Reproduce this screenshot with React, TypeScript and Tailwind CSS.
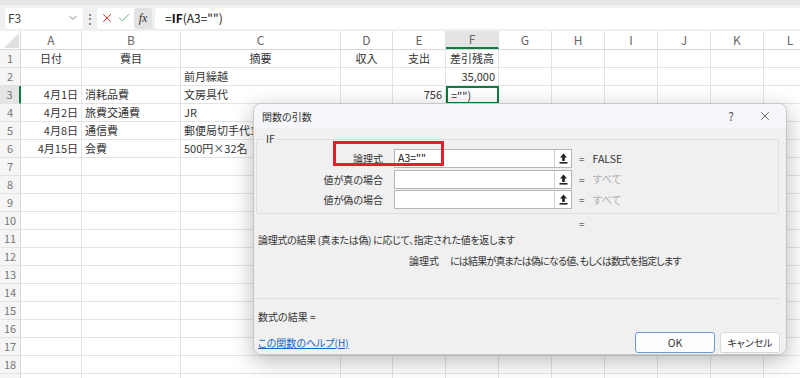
import React from 'react';
import { ChevronDown, X, Check } from 'lucide-react';

const cols = [
  { id: 'A', w: 61 },
  { id: 'B', w: 99 },
  { id: 'C', w: 160 },
  { id: 'D', w: 52 },
  { id: 'E', w: 53 },
  { id: 'F', w: 53 },
  { id: 'G', w: 53 },
  { id: 'H', w: 53 },
  { id: 'I', w: 53 },
  { id: 'J', w: 53 },
  { id: 'K', w: 53 },
  { id: 'L', w: 53 },
];

type Cell = { t: string; align?: 'l' | 'r' | 'c' };
const data: Record<number, Record<string, Cell>> = {
  1: {
    A: { t: '日付', align: 'c' },
    B: { t: '費目', align: 'c' },
    C: { t: '摘要', align: 'c' },
    D: { t: '収入', align: 'c' },
    E: { t: '支出', align: 'c' },
    F: { t: '差引残高', align: 'c' },
  },
  2: { C: { t: '前月繰越' }, F: { t: '35,000', align: 'r' } },
  3: { A: { t: '4月1日', align: 'r' }, B: { t: '消耗品費' }, C: { t: '文房具代' }, E: { t: '756', align: 'r' } },
  4: { A: { t: '4月2日', align: 'r' }, B: { t: '旅費交通費' }, C: { t: 'JR' } },
  5: { A: { t: '4月8日', align: 'r' }, B: { t: '通信費' }, C: { t: '郵便局切手代1' } },
  6: { A: { t: '4月15日', align: 'r' }, B: { t: '会費' }, C: { t: '500円×32名' } },
};

const font = { fontFamily: '"Noto Sans CJK JP", "Noto Sans", sans-serif' };

function RefButton() {
  return (
    <div className="w-[17px] h-full border-l border-[#d0d0d0] bg-white flex items-center justify-center">
      <svg width="9" height="11" viewBox="0 0 9 11">
        <path d="M4.5 0.5 L8 4.5 H5.8 V8 H3.2 V4.5 H1 Z" fill="#222" />
        <rect x="0.5" y="9" width="8" height="1.6" fill="#222" />
      </svg>
    </div>
  );
}

function ArgRow({ label, value, result, dim }: { label: string; value: string; result: string; dim?: boolean }) {
  return (
    <div className="flex items-center h-[19px]">
      <div className="w-[128px] text-right text-[10px] text-[#333] pr-[2px]">{label}</div>
      <div className="ml-[9px] w-[178px] h-[19px] bg-white border border-[#b5b5b5] flex items-center">
        <div className="flex-1 pl-[3px] text-[10.5px] text-[#111] leading-none">{value}</div>
        <RefButton />
      </div>
      <div className="ml-[7px] text-[10px] text-[#666]">=</div>
      <div className={`ml-[8px] text-[10.5px] ${dim ? 'text-[#b0b0b0]' : 'text-[#333]'}`}>{result}</div>
    </div>
  );
}

function Dialog() {
  return (
    <div
      className="absolute left-[253px] top-[103px] w-[534px] h-[252px] bg-[#f0f0f0] rounded-lg border border-[#c8c8c8] shadow-[0_6px_22px_rgba(0,0,0,0.28)] overflow-hidden [font-feature-settings:'palt']"
      style={font}
    >
      <div className="h-[24px] bg-[#f4f6fa] flex items-center pl-[8px] pr-[14px]">
        <span className="text-[10px] text-[#333]">関数の引数</span>
        <span className="ml-auto text-[12px] text-[#555]">?</span>
        <X size={14} strokeWidth={1.2} className="ml-[24px] text-[#333]" />
      </div>
      <div className="relative ml-[2px] mr-[7px] mt-[11px] h-[75px] border border-[#dedede] rounded-[2px] pt-[9px]">
        <span className="absolute -top-[8px] left-[7px] px-[2px] bg-[#f0f0f0] text-[10.5px] text-[#333] leading-[14px]">IF</span>
        <div className="flex flex-col gap-[1.5px]">
          <ArgRow label="論理式" value={'A3=""'} result="FALSE" />
          <ArgRow label="値が真の場合" value="" result="すべて" dim />
          <ArgRow label="値が偽の場合" value="" result="すべて" dim />
        </div>
        <div className="absolute left-[76px] top-[1px] w-[111px] h-[25px] border-[3px] border-[#e0202b]" />
      </div>
      <div className="h-[16px] pl-[325px] text-[10px] text-[#666] leading-[16px] mt-[2px]">=</div>
      <div className="pl-[4px] text-[10px] text-[#333] leading-[16px] tracking-[-0.3px]">
        論理式の結果 (真または偽) に応じて、指定された値を返します
      </div>
      <div className="pl-[155px] mt-[5px] flex text-[10px] text-[#333] leading-[16px]">
        <span>論理式</span>
        <span className="ml-[11px] tracking-[-0.8px]">には結果が真または偽になる値、もしくは数式を指定します</span>
      </div>
      <div className="mt-[29px] mr-[7px] border-t border-[#dedede]" />
      <div className="pl-[4px] mt-[10px] text-[10px] text-[#333] leading-[16px]">数式の結果 =</div>
      <div className="flex items-center mt-[7px] pr-[6px]">
        <span className="pl-[4px] text-[10px] text-[#1a66c2] underline">この関数のヘルプ(H)</span>
        <button className="ml-auto w-[80px] h-[21px] bg-[#fdfdfd] border border-[#6f9bd3] rounded-[3px] text-[10.5px] text-[#333]">
          OK
        </button>
        <button className="ml-[5px] w-[60px] h-[21px] bg-[#fdfdfd] border border-[#d8d8d8] rounded-[3px] text-[10px] text-[#333]">
          キャンセル
        </button>
      </div>
    </div>
  );
}

export default function App() {
  const rows = Array.from({ length: 19 }, (_, i) => i + 1);
  return (
    <div className="relative w-[800px] h-[378px] overflow-hidden bg-white" style={font}>
      {/* formula bar */}
      <div className="h-[31px] bg-[#f0f0f0] border-t-[5px] border-[#e6e6e6] flex items-center pl-[5px]">
        <div className="w-[78px] h-[21px] bg-white rounded-[3px] flex items-center pl-[3px] pr-[4px]">
          <span className="text-[12px] text-[#444]">F3</span>
          <ChevronDown size={12} strokeWidth={1.5} className="ml-auto text-[#555]" />
        </div>
        <div className="w-[14px] text-center text-[12px] text-[#555] leading-none">⋮</div>
        <div className="h-[21px] w-[55px] bg-white rounded-[3px] flex items-center pl-[3px]">
          <X size={14} strokeWidth={1.6} className="text-[#c42b1c]" />
          <Check size={14} strokeWidth={1.4} className="ml-[3px] text-[#4aa564]" />
          <div className="ml-[3px] w-[18px] h-[21px] bg-[#e3e3e3] rounded-[3px] flex items-center justify-center">
            <span className="text-[12px] italic text-[#333]" style={{ fontFamily: '"Liberation Serif", serif' }}>
              fx
            </span>
          </div>
        </div>
        <div className="ml-[3px] flex-1 h-[21px] bg-white rounded-l-[3px] flex items-center pl-[10px] text-[12px] text-[#111]">
          =<b className="font-bold">IF</b>(A3="")
        </div>
      </div>
      {/* column headers */}
      <div className="flex h-[19px] bg-white border-b border-[#d8d8d8]">
        <div className="w-[21px] shrink-0 flex items-end justify-end pr-[1px] pb-[1px] border-r border-[#d8d8d8]">
          <svg width="15" height="15" viewBox="0 0 15 15">
            <path d="M15 0 L15 15 L0 15 Z" fill="#e0e0e0" />
          </svg>
        </div>
        {cols.map((c) => (
          <div
            key={c.id}
            style={{ width: c.w }}
            className={`shrink-0 flex items-center justify-center text-[12px] text-[#666] border-r border-[#e0e0e0] ${
              c.id === 'F' ? 'bg-[#e4e4e4] border-b-2 border-b-[#107c41] text-[#107c41]' : ''
            }`}
          >
            {c.id}
          </div>
        ))}
      </div>
      {/* grid */}
      {rows.map((r) => (
        <div key={r} className="flex h-[18px]">
          <div
            className={`w-[21px] shrink-0 flex items-center justify-center text-[11px] text-[#777] border-b border-[#e3e3e3] ${
              r === 3 ? 'bg-[#e4e4e4] border-r-2 border-r-[#107c41] text-[#107c41]' : 'bg-[#f5f5f5] border-r border-r-[#d8d8d8]'
            }`}
          >
            {r < 19 ? r : ''}
          </div>
          {cols.map((c) => {
            const cell = data[r]?.[c.id];
            const sel = r === 3 && c.id === 'F';
            return (
              <div
                key={c.id}
                style={{ width: c.w }}
                className={`shrink-0 flex items-center text-[11px] text-[#333] whitespace-nowrap overflow-hidden px-[3px] ${
                  sel ? 'border-2 border-[#107c41]' : 'border-r border-b border-[#e3e3e3]'
                } ${cell?.align === 'r' ? 'justify-end' : cell?.align === 'c' ? 'justify-center' : 'justify-start'}`}
              >
                {sel ? '="")' : cell?.t}
              </div>
            );
          })}
        </div>
      ))}
      <Dialog />
    </div>
  );
}
